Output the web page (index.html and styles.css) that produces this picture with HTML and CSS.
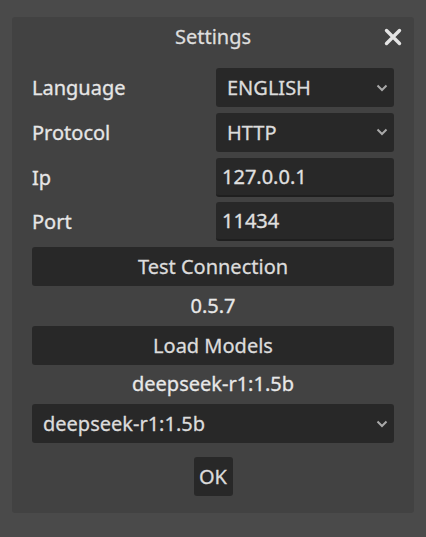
FILE: index.html
```html
<!DOCTYPE html>
<html>
<head>
<meta charset="utf-8">
<link rel="stylesheet" href="styles.css">
</head>
<body>
<div class="dialog">
  <div class="titlebar">
    <span class="title">Settings</span>
    <svg class="close" width="18" height="18" viewBox="0 0 18 18"><path d="M2.5 2.5 L15.5 15.5 M15.5 2.5 L2.5 15.5" stroke="#e4e4e4" stroke-width="3.4" stroke-linecap="round"/></svg>
  </div>
  <div class="body">
    <div class="row">
      <span class="label">Language</span>
      <div class="select"><span>ENGLISH</span><svg class="chev" width="12" height="8" viewBox="0 0 12 8"><path d="M1.5 1.5 L6 6 L10.5 1.5" fill="none" stroke="#a9a9a9" stroke-width="2"/></svg></div>
    </div>
    <div class="row">
      <span class="label">Protocol</span>
      <div class="select"><span>HTTP</span><svg class="chev" width="12" height="8" viewBox="0 0 12 8"><path d="M1.5 1.5 L6 6 L10.5 1.5" fill="none" stroke="#a9a9a9" stroke-width="2"/></svg></div>
    </div>
    <div class="row">
      <span class="label">Ip</span>
      <div class="edit">127.0.0.1</div>
    </div>
    <div class="row">
      <span class="label">Port</span>
      <div class="edit">11434</div>
    </div>
    <div class="button wide">Test Connection</div>
    <div class="info">0.5.7</div>
    <div class="button wide">Load Models</div>
    <div class="info">deepseek-r1:1.5b</div>
    <div class="select full"><span>deepseek-r1:1.5b</span><svg class="chev" width="12" height="8" viewBox="0 0 12 8"><path d="M1.5 1.5 L6 6 L10.5 1.5" fill="none" stroke="#a9a9a9" stroke-width="2"/></svg></div>
    <div class="okrow"><div class="button ok">OK</div></div>
  </div>
</div>
</body>
</html>
```
FILE: styles.css
```css
html, body {
  margin: 0;
  padding: 0;
}
body {
  background: #4a4a4a;
  font-family: "Noto Sans", "Open Sans", sans-serif;
  font-size: 20px;
  color: #e0e0e0;
  -webkit-text-stroke: 0.3px currentColor;
  width: 426px;
  height: 537px;
  overflow: hidden;
}
.dialog {
  margin: 17px 12px 0 12px;
  width: 402px;
  height: 496px;
  background: #424242;
  border-radius: 3px;
  box-sizing: border-box;
}
.titlebar {
  height: 40px;
  position: relative;
  display: flex;
  align-items: center;
  justify-content: center;
}
.title {
  line-height: 40px;
  color: #dedede;
}
.close {
  position: absolute;
  right: 12px;
  top: 11px;
}
.body {
  margin-top: 11px;
  padding: 0 20px;
  display: flex;
  flex-direction: column;
  gap: 5.75px;
}
.row {
  display: grid;
  grid-template-columns: 184px 178px;
  height: 39px;
  align-items: center;
}
.label {
  color: #e6e6e6;
  line-height: 39px;
}
.select {
  height: 39px;
  background: #282828;
  border-radius: 3px;
  display: flex;
  align-items: center;
  justify-content: space-between;
  padding: 0 6px 0 11px;
  box-sizing: border-box;
  color: #dcdcdc;
}
.select.full {
  width: 362px;
  padding-left: 11px;
}
.edit {
  height: 39px;
  background: #282828;
  border-radius: 3px;
  border-bottom: 2px solid #1f1f1f;
  box-sizing: border-box;
  display: flex;
  align-items: center;
  padding: 0 6px;
  color: #e0e0e0;
}
.button {
  height: 39px;
  background: #282828;
  border-radius: 3px;
  display: flex;
  align-items: center;
  justify-content: center;
  color: #dcdcdc;
  box-sizing: border-box;
}
.wide {
  width: 362px;
}
.info {
  height: 28px;
  line-height: 28px;
  text-align: center;
  color: #e8e8e8;
}
.okrow {
  margin-top: 8.25px;
  display: flex;
  justify-content: center;
}
.ok {
  width: 39px;
}
```
